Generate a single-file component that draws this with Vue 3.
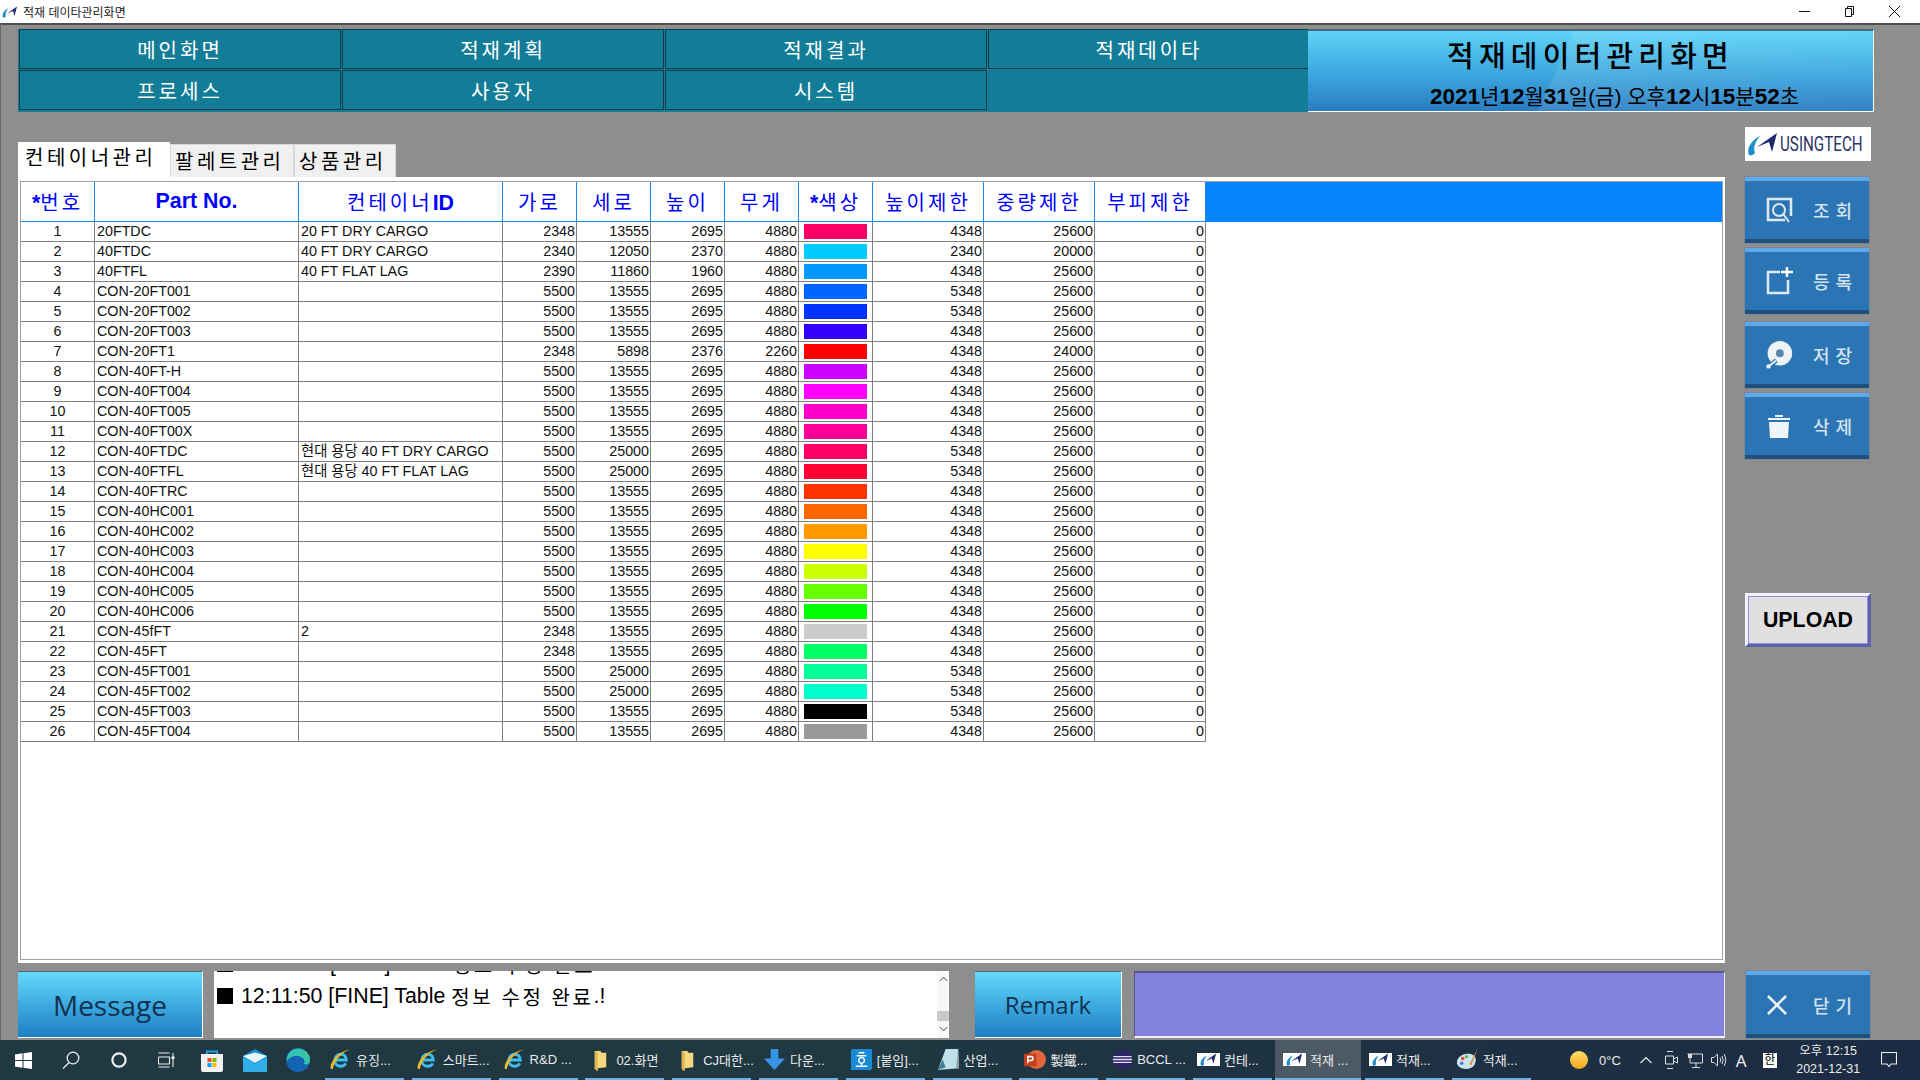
<template>
  <div class="app">
    <!-- shared icons -->
    <svg class="defs" width="0" height="0">
      <symbol id="ut" viewBox="0 0 30 24">
        <path d="M2 23C-1 16 5 8 13 4C8 10 6 16 8 21C6 23 4 24 2 23Z" fill="#1e8fc8" />
        <path d="M10 15L30 1L25 20L22 10Z" fill="#1f2a6b" />
      </symbol>
      <symbol id="ie" viewBox="0 0 24 24">
        <path d="M6.5 12.5H18C18 9 15.5 6.5 12.3 6.5C8.8 6.5 6 9.3 6 13C6 16.7 8.8 19 12.2 19C14.6 19 16.5 18 17.6 16" fill="none" stroke="#3fbdf0" stroke-width="3" />
        <path d="M2 22C0 15 10 3 22 1.500C14 4 6 12 4 22Z" fill="#e6b92c" />
      </symbol>
      <symbol id="folder" viewBox="0 0 24 24">
        <path d="M6 3H12L13 5H18V20L9 21V24L6 22Z" fill="#f5d77e" />
        <path d="M6 3L9 5V24L6 22Z" fill="#e2b64e" />
      </symbol>
    </svg>

    <div class="titlebar">
      <svg class="title-logo"><use href="#ut" /></svg>
      <span class="title-text">적재 데이타관리화면</span>
      <div class="win-btns">
        <svg width="11" height="11" viewBox="0 0 11 11"><path d="M0 5.500H11" stroke="#111" /></svg>
        <svg width="11" height="11" viewBox="0 0 11 11"><path d="M3.500 2.500V.5H9.500V8.500H7.500M1.500 2.500H7.500V10.500H1.500Z" fill="none" stroke="#111" /></svg>
        <svg width="11" height="11" viewBox="0 0 11 11"><path d="M0 0L11 11M11 0L0 11" stroke="#111" /></svg>
      </div>
    </div>

    <div class="window">
      <div class="top">
        <nav class="nav">
          <button v-for="m in menus" :key="m" class="nav-btn">{{ m }}</button>
        </nav>
        <div class="title-panel">
          <div class="screen-title">적재데이터관리화면</div>
          <div class="screen-date">
            <template v-for="d in dateParts" :key="d[0]"><b>{{ d[0] }}</b>{{ d[1] }} </template>
          </div>
        </div>
      </div>

      <div class="body">
        <div class="main">
          <div class="tabs">
            <div class="tab active">컨테이너관리</div>
            <div class="tab">팔레트관리</div>
            <div class="tab">상품관리</div>
          </div>
          <div class="panel">
            <div class="grid-box">
              <table>
                <colgroup>
                  <col class="c-no" />
                  <col class="c-text" />
                  <col class="c-text" />
                  <col v-for="n in 5" :key="n" class="c-num" />
                  <col v-for="n in 3" :key="'l' + n" class="c-limit" />
                  <col />
                </colgroup>
                <thead>
                  <tr>
                    <th v-for="h in headers" :key="h.ko + h.pre + h.post">
                      <b v-if="h.pre">{{ h.pre }}</b><span v-if="h.ko" class="ko">{{ h.ko }}</span><b v-if="h.post">{{ h.post }}</b>
                    </th>
                    <th class="filler"></th>
                  </tr>
                </thead>
                <tbody>
                  <tr v-for="(r, i) in rows" :key="i">
                    <td class="center">{{ i + 1 }}</td>
                    <td>{{ r[0] }}</td>
                    <td>{{ r[1] }}</td>
                    <td class="right">{{ r[2] }}</td>
                    <td class="right">{{ r[3] }}</td>
                    <td class="right">{{ r[4] }}</td>
                    <td class="right">{{ r[5] }}</td>
                    <td class="swatch-cell"><div class="swatch" :style="{ background: r[6] }"></div></td>
                    <td class="right">{{ r[7] }}</td>
                    <td class="right">{{ r[8] }}</td>
                    <td class="right">0</td>
                  </tr>
                </tbody>
              </table>
            </div>
          </div>
        </div>

        <aside class="side">
          <div class="logo">
            <svg class="logo-mark"><use href="#ut" /></svg>
            <span class="logo-text">USINGTECH</span>
          </div>
          <button class="side-btn">
            <svg class="ico" viewBox="0 0 28 28" fill="none" stroke="#dfe9f3" stroke-width="2.500">
              <path d="M20 24H3V3H26V20" />
              <circle cx="14" cy="14" r="6" stroke-width="2" />
              <path d="M18.500 18.500L24 26" stroke-width="2" />
            </svg>
            <span>조회</span>
          </button>
          <button class="side-btn">
            <svg class="ico" viewBox="0 0 28 28" fill="none" stroke="#dfe9f3" stroke-width="2.500">
              <path d="M15 5H3V26H23V13" />
              <path d="M22 0V10M16 5H28" stroke="#fff" />
            </svg>
            <span>등록</span>
          </button>
          <button class="side-btn save">
            <svg class="ico" viewBox="0 0 32 32">
              <circle cx="17" cy="14" r="14" fill="#eef3f8" />
              <circle cx="17" cy="14" r="4.500" fill="#5b84ad" />
              <path d="M3 31L13 22" stroke="#2c75b5" stroke-width="5" />
              <path d="M3 30L13 22" stroke="#eef3f8" stroke-width="2" />
              <circle cx="4" cy="29" r="2.500" fill="#eef3f8" />
            </svg>
            <span>저장</span>
          </button>
          <button class="side-btn">
            <svg class="ico" viewBox="0 0 28 28" fill="#f2f5f8">
              <path d="M4 10H24L23 26H5Z" />
              <path d="M3 6H25V8H3ZM10 3H18V5H10Z" />
            </svg>
            <span>삭제</span>
          </button>
          <button class="upload">UPLOAD</button>
        </aside>
      </div>

      <div class="bottom">
        <div class="label-box message">Message</div>
        <div class="msg-box">
          <div class="msg-list">
            <div v-for="m in messages" :key="m" class="msg-line"><i class="bullet"></i>12:{{ m }} [FINE] Table <span class="msg-ko">정보 수정 완료</span>.!</div>
          </div>
          <div class="scroll">
            <svg width="11" height="8" viewBox="0 0 11 8"><path d="M2 6L5.500 2L9 6" fill="none" stroke="#555" /></svg>
            <div class="thumb"></div>
            <svg width="11" height="8" viewBox="0 0 11 8"><path d="M2 2L5.500 6L9 2" fill="none" stroke="#555" /></svg>
          </div>
        </div>
        <div class="label-box remark">Remark</div>
        <div class="remark-field"></div>
        <button class="side-btn close">
          <svg class="ico-x" viewBox="0 0 22 22"><path d="M2 2L20 20M20 2L2 20" stroke="#eef3f8" stroke-width="2.600" /></svg>
          <span>닫기</span>
        </button>
      </div>
    </div>

    <footer class="taskbar">
      <div class="start-icons">
        <div class="sys-ico wide">
          <svg width="17" height="17" viewBox="0 0 17 17" fill="#fff"><path d="M0 2.500L7.500 1.300V8H0ZM8.500 1.200L17 0V8H8.500ZM0 9H7.500V15.700L0 14.500ZM8.500 9H17V17L8.500 15.800Z" /></svg>
        </div>
        <div class="sys-ico wide">
          <svg width="18" height="18" viewBox="0 0 18 18" fill="none" stroke="#f0f0f0" stroke-width="1.300"><circle cx="11" cy="7" r="5.800" /><path d="M7 11.500L1 17.500" /></svg>
        </div>
        <div class="sys-ico wide">
          <svg width="16" height="16" viewBox="0 0 16 16" fill="none" stroke="#eee" stroke-width="2.200"><circle cx="8" cy="8" r="6.600" /></svg>
        </div>
        <div class="sys-ico wide">
          <svg width="17" height="16" viewBox="0 0 17 16" fill="none" stroke="#eee" stroke-width="1.100"><path d="M.5 1H11.500M.5 15H11.500M.5 5H11.500V12M.5 5V12H11.500M15 1V15" /><path d="M13.500 4.500H16.500V7H13.500Z" fill="#eee" stroke="none" /></svg>
        </div>
        <div class="sys-ico">
          <svg width="24" height="24" viewBox="0 0 24 24">
            <path d="M7 6V3.500H17V6" fill="none" stroke="#1fa0e0" stroke-width="2" />
            <path d="M1 6H23V22Q23 24 21 24H3Q1 24 1 22Z" fill="#f1f1f1" />
            <path d="M7.500 10H11.500V14H7.500Z" fill="#f25022" /><path d="M12.500 10H16.500V14H12.500Z" fill="#7fba00" />
            <path d="M7.500 15H11.500V19H7.500Z" fill="#00a4ef" /><path d="M12.500 15H16.500V19H12.500Z" fill="#ffb900" />
          </svg>
        </div>
        <div class="sys-ico">
          <svg width="24" height="23" viewBox="0 0 24 23">
            <path d="M0 7L12 0L24 7V23H0Z" fill="#1490d8" />
            <path d="M0 7L12 14L24 7L12 3.500Z" fill="#e8f4fb" />
            <path d="M0 8L12 15L24 8V23H0Z" fill="#2fb0ea" />
          </svg>
        </div>
        <div class="sys-ico">
          <svg width="24" height="24" viewBox="0 0 24 24">
            <circle cx="12" cy="12" r="12" fill="#1464b4" />
            <path d="M1 9C3 2 10-1 16 1C21 3 24 8 24 13C24 16 21 17 18 16C20 12 16 8 11 8C6 8 3 10 1 13Z" fill="#33c3b0" />
            <path d="M24 12C24 9 22 5 18 3L22 8Z" fill="#7fd84a" />
          </svg>
        </div>
      </div>
      <div class="task-items">
        <div v-for="t in tasks" :key="t.label + t.icon + t.active" class="task" :class="{ active: t.active }">
          <svg v-if="t.icon === 'ie' || t.icon === 'folder'" class="task-ico"><use :href="'#' + t.icon" /></svg>
          <svg v-else-if="t.icon === 'down'" class="task-ico" viewBox="0 0 24 24"><path d="M8 1H16V11H23L12 23L1 11H8Z" fill="#3a94e4" /></svg>
          <svg v-else-if="t.icon === 'hwp'" class="task-ico" viewBox="0 0 24 24">
            <path d="M3 1H23V20Q23 23 20 23H1V3Q1 1 3 1Z" fill="#1a8ad8" />
            <path d="M9 5H15M7 8H17M12 10A3 3 0 1 0 12.100 10M12 16V18M6 19H18" fill="none" stroke="#fff" stroke-width="1.500" />
          </svg>
          <svg v-else-if="t.icon === 'note'" class="task-ico" viewBox="0 0 24 24">
            <path d="M9 1H22L23 21L1 23Z" fill="#bfe0e8" />
            <path d="M22 1L23 21L20 22Z" fill="#8c9aa0" />
            <path d="M6 12L1 23L9 20Z" fill="#3f7f96" />
          </svg>
          <svg v-else-if="t.icon === 'ppt'" class="task-ico" viewBox="0 0 24 24">
            <circle cx="14" cy="12" r="10" fill="#e0673c" />
            <rect x="1" y="6" width="13" height="13" rx="1" fill="#c43e1c" />
            <path d="M5 16V9H8.500Q10.500 9 10.500 11T8.500 13H5" fill="none" stroke="#fff" stroke-width="1.600" />
          </svg>
          <svg v-else-if="t.icon === 'eclipse'" class="task-ico" viewBox="0 0 24 24">
            <path d="M12 0A12 12 0 0 0 12 24A12 12 0 0 1 12 0Z" fill="#f08a1c" />
            <circle cx="13" cy="12" r="10.500" fill="#2c2565" />
            <path d="M3.500 9H22.500M3 12H23M3.500 15H22.500" stroke="#e0dcf5" stroke-width="1.400" />
          </svg>
          <span v-else-if="t.icon === 'ut'" class="task-logo"><svg><use href="#ut" /></svg></span>
          <svg v-else-if="t.icon === 'paint'" class="task-ico" viewBox="0 0 24 24">
            <path d="M1 16C0 10 7 5 14 6C21 7 22 12 19 18C16 23 3 24 1 16Z" fill="#cfe3ef" />
            <circle cx="7" cy="11" r="1.800" fill="#e04a3c" /><circle cx="11" cy="9" r="1.800" fill="#5cb848" /><circle cx="6" cy="16" r="1.800" fill="#3a7fe0" />
            <path d="M23 0L14 17L16 18Z" fill="#d9912c" />
          </svg>
          <span class="task-label">{{ t.label }}</span>
        </div>
      </div>
      <div class="tray">
        <div class="sun"></div>
        <span class="temp">0°C</span>
        <svg class="t-chev" width="12" height="8" viewBox="0 0 12 8"><path d="M.5 7L6 1.500L11.500 7" fill="none" stroke="#eee" stroke-width="1.100" /></svg>
        <svg class="t-cam" width="13" height="18" viewBox="0 0 13 18" fill="none" stroke="#ddd"><path d="M2 .5H8M2 17.500H8M.5 5H8.500V13H.5ZM8.500 8L12.500 6V12L8.500 10" /></svg>
        <svg class="t-net" width="16" height="15" viewBox="0 0 16 15" fill="none" stroke="#ddd"><path d="M3 1H15.500V10H3M0.500 1H3V10M9 10V14M5 14.500H13" /><path d="M1 1H5V5H1Z" fill="#ddd" stroke="none" /></svg>
        <svg class="t-vol" width="16" height="14" viewBox="0 0 16 14" fill="none" stroke="#ddd"><path d="M.5 4.500H3L6.500 1V13L3 9.500H.5ZM9 4.500Q10.500 7 9 9.500M11 3Q13.500 7 11 11M13 1Q16.500 7 13 13" /></svg>
        <span class="t-ime">A</span>
        <span class="t-han">한</span>
        <div class="clock"><div>오후 12:15</div><div>2021-12-31</div></div>
        <svg class="t-note" width="16" height="16" viewBox="0 0 16 16" fill="none" stroke="#eee" stroke-width="1.100"><path d="M.5.5H15.500V12H10L8 14.500L6 12H.5Z" /></svg>
      </div>
    </footer>
  </div>
</template>

<script setup>
const menus = ['메인화면', '적재계획', '적재결과', '적재데이타', '프로세스', '사용자', '시스템']

const dateParts = [['2021', '년'], ['12', '월'], ['31', '일'], ['', '(금) 오후'], ['12', '시'], ['15', '분'], ['52', '초']]

const headers = [
  { pre: '*', ko: '번호', post: '' },
  { pre: 'Part No.', ko: '', post: '' },
  { pre: '', ko: '컨테이너', post: 'ID' },
  { pre: '', ko: '가로', post: '' },
  { pre: '', ko: '세로', post: '' },
  { pre: '', ko: '높이', post: '' },
  { pre: '', ko: '무게', post: '' },
  { pre: '*', ko: '색상', post: '' },
  { pre: '', ko: '높이제한', post: '' },
  { pre: '', ko: '중량제한', post: '' },
  { pre: '', ko: '부피제한', post: '' }
]

// part, description, width, depth, height, weight, colour, height limit, weight limit
const rows = [
  ['20FTDC', '20 FT DRY CARGO', 2348, 13555, 2695, 4880, '#ff0066', 4348, 25600],
  ['40FTDC', '40 FT DRY CARGO', 2340, 12050, 2370, 4880, '#00ccff', 2340, 20000],
  ['40FTFL', '40 FT FLAT LAG', 2390, 11860, 1960, 4880, '#0099ff', 4348, 25600],
  ['CON-20FT001', '', 5500, 13555, 2695, 4880, '#0066ff', 5348, 25600],
  ['CON-20FT002', '', 5500, 13555, 2695, 4880, '#0033ff', 5348, 25600],
  ['CON-20FT003', '', 5500, 13555, 2695, 4880, '#3300ff', 4348, 25600],
  ['CON-20FT1', '', 2348, 5898, 2376, 2260, '#ff0000', 4348, 24000],
  ['CON-40FT-H', '', 5500, 13555, 2695, 4880, '#cc00ff', 4348, 25600],
  ['CON-40FT004', '', 5500, 13555, 2695, 4880, '#ff00ff', 4348, 25600],
  ['CON-40FT005', '', 5500, 13555, 2695, 4880, '#ff00cc', 4348, 25600],
  ['CON-40FT00X', '', 5500, 13555, 2695, 4880, '#ff0099', 4348, 25600],
  ['CON-40FTDC', '현대 용당 40 FT DRY CARGO', 5500, 25000, 2695, 4880, '#ff0066', 5348, 25600],
  ['CON-40FTFL', '현대 용당 40 FT FLAT LAG', 5500, 25000, 2695, 4880, '#ff0033', 5348, 25600],
  ['CON-40FTRC', '', 5500, 13555, 2695, 4880, '#ff3300', 4348, 25600],
  ['CON-40HC001', '', 5500, 13555, 2695, 4880, '#ff6600', 4348, 25600],
  ['CON-40HC002', '', 5500, 13555, 2695, 4880, '#ff9900', 4348, 25600],
  ['CON-40HC003', '', 5500, 13555, 2695, 4880, '#ffff00', 4348, 25600],
  ['CON-40HC004', '', 5500, 13555, 2695, 4880, '#ccff00', 4348, 25600],
  ['CON-40HC005', '', 5500, 13555, 2695, 4880, '#66ff00', 4348, 25600],
  ['CON-40HC006', '', 5500, 13555, 2695, 4880, '#00ff00', 4348, 25600],
  ['CON-45fFT', '2', 2348, 13555, 2695, 4880, '#cccccc', 4348, 25600],
  ['CON-45FT', '', 2348, 13555, 2695, 4880, '#00ff66', 4348, 25600],
  ['CON-45FT001', '', 5500, 25000, 2695, 4880, '#00ff99', 5348, 25600],
  ['CON-45FT002', '', 5500, 25000, 2695, 4880, '#00ffcc', 5348, 25600],
  ['CON-45FT003', '', 5500, 13555, 2695, 4880, '#000000', 5348, 25600],
  ['CON-45FT004', '', 5500, 13555, 2695, 4880, '#999999', 4348, 25600]
]

const messages = ['10:23', '11:50']

const tasks = [
  { icon: 'ie', label: '유징...' },
  { icon: 'ie', label: '스마트...' },
  { icon: 'ie', label: 'R&D ...' },
  { icon: 'folder', label: '02.화면' },
  { icon: 'folder', label: 'CJ대한...' },
  { icon: 'down', label: '다운...' },
  { icon: 'hwp', label: '[붙임]...' },
  { icon: 'note', label: '산업...' },
  { icon: 'ppt', label: '製鐵...' },
  { icon: 'eclipse', label: 'BCCL ...' },
  { icon: 'ut', label: '컨테...' },
  { icon: 'ut', label: '적재 ...', active: true },
  { icon: 'ut', label: '적재...' },
  { icon: 'paint', label: '적재...' }
]
</script>

<style scoped>
.app {
  width: 1920px;
  height: 1080px;
  display: flex;
  flex-direction: column;
  font-family: "Liberation Sans", "Noto Sans CJK KR", sans-serif;
  color: #000;
  overflow: hidden;
}

.defs {
  position: absolute;
}

/* title bar */
.titlebar {
  height: 23px;
  flex: none;
  display: flex;
  align-items: center;
  background: #fff;
  padding-left: 2px;
}

.title-logo {
  width: 15px;
  height: 12px;
}

.title-text {
  margin-left: 6px;
  font-size: 12px;
  color: #222;
}

.win-btns {
  margin-left: auto;
  display: flex;
  gap: 34px;
  padding-right: 20px;
}

/* window */
.window {
  height: 1017px;
  flex: none;
  box-sizing: border-box;
  display: flex;
  flex-direction: column;
  background: #8e8e8e;
  border-top: 2px solid #505050;
  border-left: 1px solid #666;
  padding: 4px 46px 0 17px;
}

.top {
  display: flex;
  height: 83px;
  flex: none;
}

.nav {
  width: 1290px;
  flex: none;
  display: grid;
  grid-template-columns: repeat(4, 322px);
  grid-template-rows: 40px 40px;
  gap: 1px;
  padding: 0 0 3px 1px;
  box-sizing: border-box;
  background: #137d98;
}

.nav-btn {
  background: #137d98;
  border: 1px solid #0f3d4a;
  color: #fff;
  font-family: inherit;
  font-size: 20px;
  letter-spacing: 3px;
  padding: 0;
}

.title-panel {
  flex: 1;
  box-sizing: border-box;
  text-align: center;
  border-top: 2px solid #46697c;
  border-right: 1px solid #fff;
  border-bottom: 1px solid #fff;
  padding-top: 6px;
  background:
    linear-gradient(114deg, transparent 44%, rgba(255, 255, 255, 0.1) 44.500%, rgba(255, 255, 255, 0.04) 100%),
    linear-gradient(#5dd3f8 0%, #3ba6de 55%, #2a7cc2 100%);
}

.screen-title {
  font-size: 29px;
  font-weight: 500;
  line-height: 40px;
  letter-spacing: 5.200px;
}

.screen-date {
  margin-top: 6px;
  padding-left: 48px;
  font-size: 21px;
  line-height: 28px;
  white-space: nowrap;
}

.screen-date b {
  font-size: 22.500px;
}

.body {
  display: flex;
  height: 836px;
  flex: none;
  margin-top: 15px;
}

.main {
  width: 1707px;
  flex: none;
  padding-top: 15px;
}

.tabs {
  display: flex;
  height: 35px;
  align-items: flex-end;
}

.tab {
  box-sizing: border-box;
  width: 124px;
  height: 33px;
  background: #f0f0f0;
  border: 1px solid #d8d8d8;
  border-bottom: 0;
  font-size: 20px;
  letter-spacing: 3.500px;
  line-height: 34px;
  padding-left: 4px;
  white-space: nowrap;
}

.tab:nth-child(3) {
  width: 102px;
}

.tab.active {
  width: 152px;
  height: 35px;
  background: #fff;
  border: 0;
  line-height: 32px;
  padding-left: 7px;
}

.panel {
  box-sizing: border-box;
  height: 786px;
  background: #fff;
  padding: 4px 2px 3px 2px;
}

.grid-box {
  height: 100%;
  box-sizing: border-box;
  border: 1px solid #a0a0a0;
  overflow: hidden;
}

table {
  width: 100%;
  table-layout: fixed;
  border-collapse: separate;
  border-spacing: 0;
}

.c-no { width: 74px; }
.c-text { width: 204px; }
.c-num { width: 74px; }
.c-limit { width: 111px; }

th {
  height: 39px;
  padding: 0;
  background: #fff;
  border-right: 1px solid #1e88e5;
  border-bottom: 1px solid #1e88e5;
  color: #0000ff;
  font-size: 21.330px;
  font-weight: bold;
  white-space: nowrap;
}

th .ko {
  font-size: 20px;
  font-weight: normal;
  letter-spacing: 3px;
}

th.filler {
  background: #0585fc;
  border-color: #0585fc;
}

td {
  height: 19px;
  padding: 0 2px;
  border-right: 1px solid #808080;
  border-bottom: 1px solid #808080;
  font-size: 14.300px;
  line-height: 19px;
  color: #111;
  white-space: nowrap;
  overflow: hidden;
}

.center {
  text-align: center;
}

.right {
  text-align: right;
  padding: 0 1px 0 0;
}

.swatch-cell {
  padding: 0 5px;
}

.swatch {
  width: 63px;
  height: 15px;
}

/* right column */
.side {
  width: 126px;
  flex: none;
  margin-left: 20px;
  display: flex;
  flex-direction: column;
  align-items: flex-start;
}

.logo {
  width: 126px;
  height: 34px;
  flex: none;
  background: #fff;
  margin-bottom: 16px;
  display: flex;
  align-items: center;
  padding-left: 2px;
  box-sizing: border-box;
}

.logo-mark {
  width: 30px;
  height: 24px;
  flex: none;
}

.logo-text {
  display: inline-block;
  font-family: Roboto, sans-serif;
  font-size: 20px;
  color: #2b3566;
  transform: scaleX(0.76);
  transform-origin: left center;
  margin-left: 3px;
  white-space: nowrap;
}

.side-btn {
  width: 124px;
  height: 66px;
  flex: none;
  box-sizing: border-box;
  display: flex;
  align-items: center;
  padding: 0 0 0 20px;
  margin-bottom: 5px;
  background: #2c75b5;
  border: 0;
  border-top: 4px solid #5fa8ea;
  border-bottom: 4px solid #1f4f7c;
  outline: 1px solid #7b8894;
  font-family: inherit;
  font-size: 18px;
  font-weight: 500;
  letter-spacing: 6px;
  color: #d3e2ef;
}

.side-btn.save {
  margin-top: 3px;
}

.ico {
  width: 28px;
  height: 28px;
  flex: none;
  margin-right: 20px;
}

.ico-x {
  width: 22px;
  height: 22px;
  flex: none;
  margin-right: 25px;
}

.upload {
  margin-top: 129px;
  width: 126px;
  height: 54px;
  box-sizing: border-box;
  background: #e0e0e0;
  border: 3px solid;
  border-color: #f4f4ff #5f5fa8 #5f5fa8 #f4f4ff;
  box-shadow: inset 0 0 0 1px #9090e0;
  font-family: inherit;
  font-size: 21.330px;
  font-weight: bold;
  color: #000;
  padding: 0;
}

/* bottom row */
.bottom {
  display: flex;
  height: 67px;
  flex: none;
  margin-top: 8px;
}

.label-box {
  box-sizing: border-box;
  display: flex;
  align-items: center;
  justify-content: center;
  background: linear-gradient(#64dafc 0%, #3aa6de 55%, #1f7ec4 100%);
  border-top: 1px solid #4d6570;
  border-right: 1px solid #fff;
  border-bottom: 1px solid #fff;
  font-family: "Open Sans", sans-serif;
  color: #12324f;
}

.message {
  width: 185px;
  font-size: 28px;
}

.remark {
  width: 147px;
  margin-left: 26px;
  font-size: 24px;
}

.msg-box {
  width: 735px;
  margin-left: 11px;
  background: #fff;
  display: flex;
  overflow: hidden;
}

.msg-list {
  flex: 1;
  margin-top: -23px;
  padding-left: 3px;
}

.msg-line {
  display: flex;
  align-items: center;
  height: 32px;
  font-size: 21.330px;
  white-space: pre;
}

.msg-ko {
  font-size: 20px;
  margin-left: 0;
  letter-spacing: 2.600px;
}

.bullet {
  width: 16px;
  height: 16px;
  background: #000;
  margin-right: 8px;
}

.scroll {
  width: 12px;
  flex: none;
  background: #f8f8f8;
  display: flex;
  flex-direction: column;
  align-items: center;
  padding-top: 4px;
}

.thumb {
  width: 12px;
  height: 10px;
  background: #c8c8c8;
  margin: 28px 0 4px;
}

.remark-field {
  width: 591px;
  margin-left: 12px;
  box-sizing: border-box;
  background: #8282dc;
  border-top: 2px solid #55558f;
  border-left: 1px solid #55558f;
  border-right: 1px solid #e8e8f8;
  border-bottom: 2px solid #f0f0fa;
}

.side-btn.close {
  margin: 0 0 0 21px;
  height: 67px;
}

/* taskbar */
.taskbar {
  height: 40px;
  flex: none;
  display: flex;
  background: linear-gradient(90deg, #1f3841 0%, #1f3841 45%, #1c2b44 100%);
  color: #ececec;
  font-size: 13px;
}

.start-icons {
  display: flex;
  width: 325px;
  flex: none;
  padding-right: 6px;
  box-sizing: border-box;
}

.sys-ico {
  width: 43px;
  display: flex;
  align-items: center;
  justify-content: center;
}

.sys-ico.wide {
  width: 47.500px;
}

.task-items {
  display: flex;
  gap: 7.800px;
}

.task {
  box-sizing: border-box;
  width: 79px;
  display: flex;
  align-items: center;
  padding-left: 4px;
  border-bottom: 2px solid #6fb3e4;
  white-space: nowrap;
}

.task.active {
  width: 86px;
  margin: 0 -3.800px 0 -4.800px;
  padding-left: 8px;
  background: #4d5a66;
}

.task-ico {
  width: 23px;
  height: 23px;
  flex: none;
}

.task-logo {
  width: 23px;
  height: 13px;
  flex: none;
  background: #fff;
  display: flex;
  align-items: center;
  justify-content: center;
}

.task-logo svg {
  width: 18px;
  height: 13px;
}

.task-label {
  margin-left: 4px;
}

.tray {
  margin-left: auto;
  display: flex;
  align-items: center;
  width: 350px;
  flex: none;
  box-sizing: border-box;
}

.sun {
  width: 18px;
  height: 18px;
  border-radius: 50%;
  background: linear-gradient(#ffdf6a, #f7a519);
}

.temp { margin-left: 11px; }
.t-chev { margin-left: 19px; }
.t-cam { margin-left: 13px; }
.t-net { margin-left: 9px; }
.t-vol { margin-left: 8px; }

.t-ime {
  margin-left: 9px;
  font-family: "Noto Sans", sans-serif;
  font-size: 17px;
}

.t-han {
  margin-left: 16px;
  width: 14px;
  height: 15px;
  background: #fff;
  color: #000;
  font-size: 12px;
  line-height: 15px;
  text-align: center;
}

.clock {
  margin-left: 19px;
  width: 65px;
  text-align: center;
  font-size: 12.500px;
  line-height: 18px;
  white-space: nowrap;
}

.t-note { margin-left: 20px; }
</style>

<style>
html, body {
  margin: 0;
  overflow: hidden;
}
</style>
